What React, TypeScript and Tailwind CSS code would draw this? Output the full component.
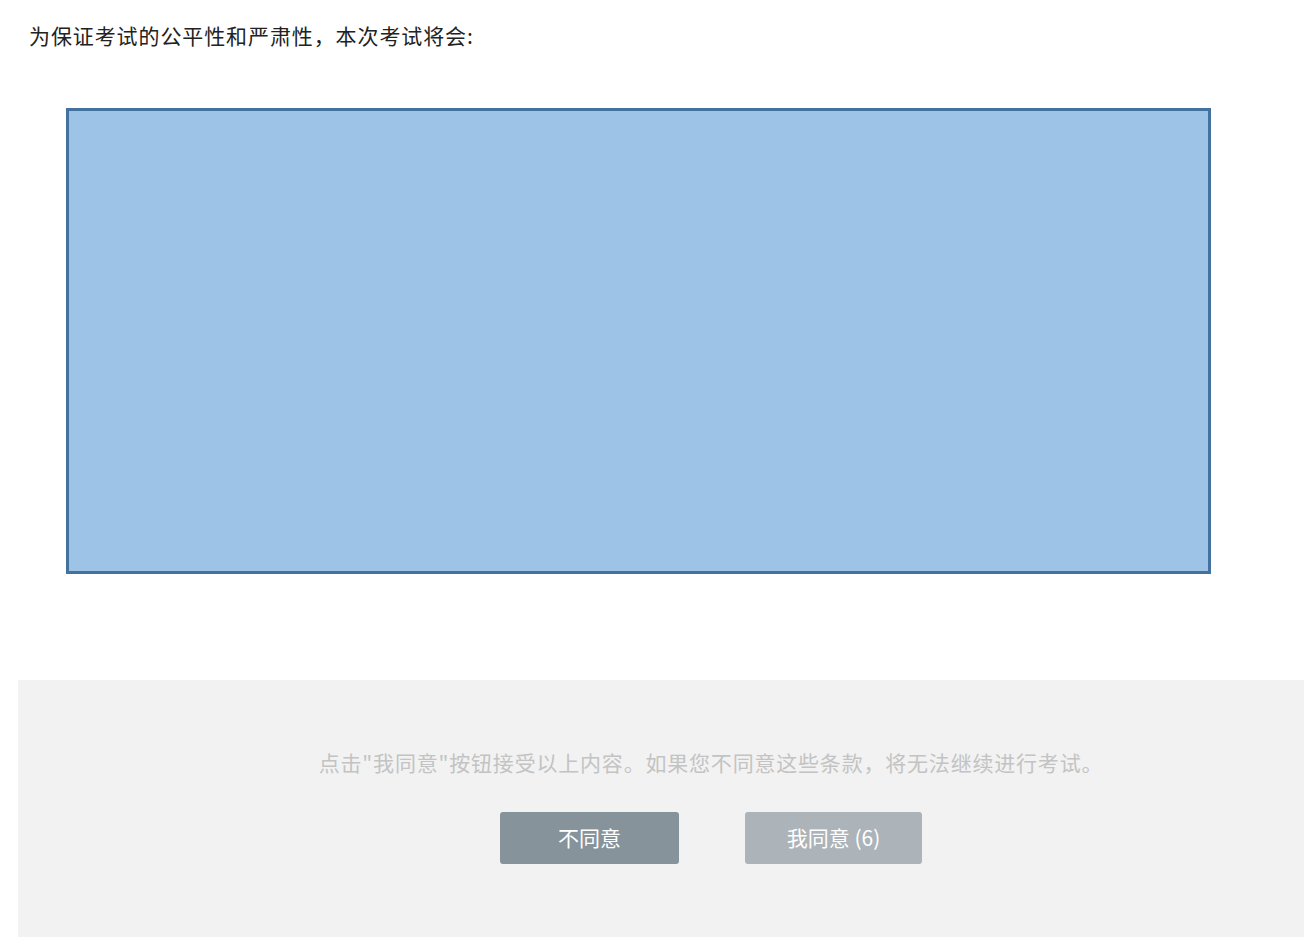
import React from 'react';

const font = "font-['Microsoft_YaHei','Noto_Sans_CJK_SC',sans-serif]";

const App = () => {
  return (
    <div className={`w-[1308px] h-[948px] bg-white ${font}`}>
      <div className="pt-[20px] pl-[29px] text-[21px] leading-[30px] text-[#222] tracking-[0.9px]">
        为保证考试的公平性和严肃性，本次考试将会:
      </div>
      <div className="ml-[66px] mt-[58px] w-[1145px] h-[466px] border-[3px] border-[#44729f] bg-[#9dc3e6]" />
      <div className="ml-[18px] mt-[106px] w-[1286px] h-[257px] bg-[#f2f2f2] flex flex-col items-center pt-[67px] pl-[100px]">
        <div className="text-[21px] leading-[30px] text-[#c3c3c3] tracking-[0.8px]">
          点击"我同意"按钮接受以上内容。如果您不同意这些条款，将无法继续进行考试。
        </div>
        <div className="mt-[35px] flex gap-[66px]">
          <button className="w-[179px] h-[52px] rounded-[3px] bg-[#86939b] text-white text-[21px]">
            不同意
          </button>
          <button className="w-[177px] h-[52px] rounded-[3px] bg-[#acb3b9] text-white text-[21px]">
            我同意 (6)
          </button>
        </div>
      </div>
    </div>
  );
};

export default App;
